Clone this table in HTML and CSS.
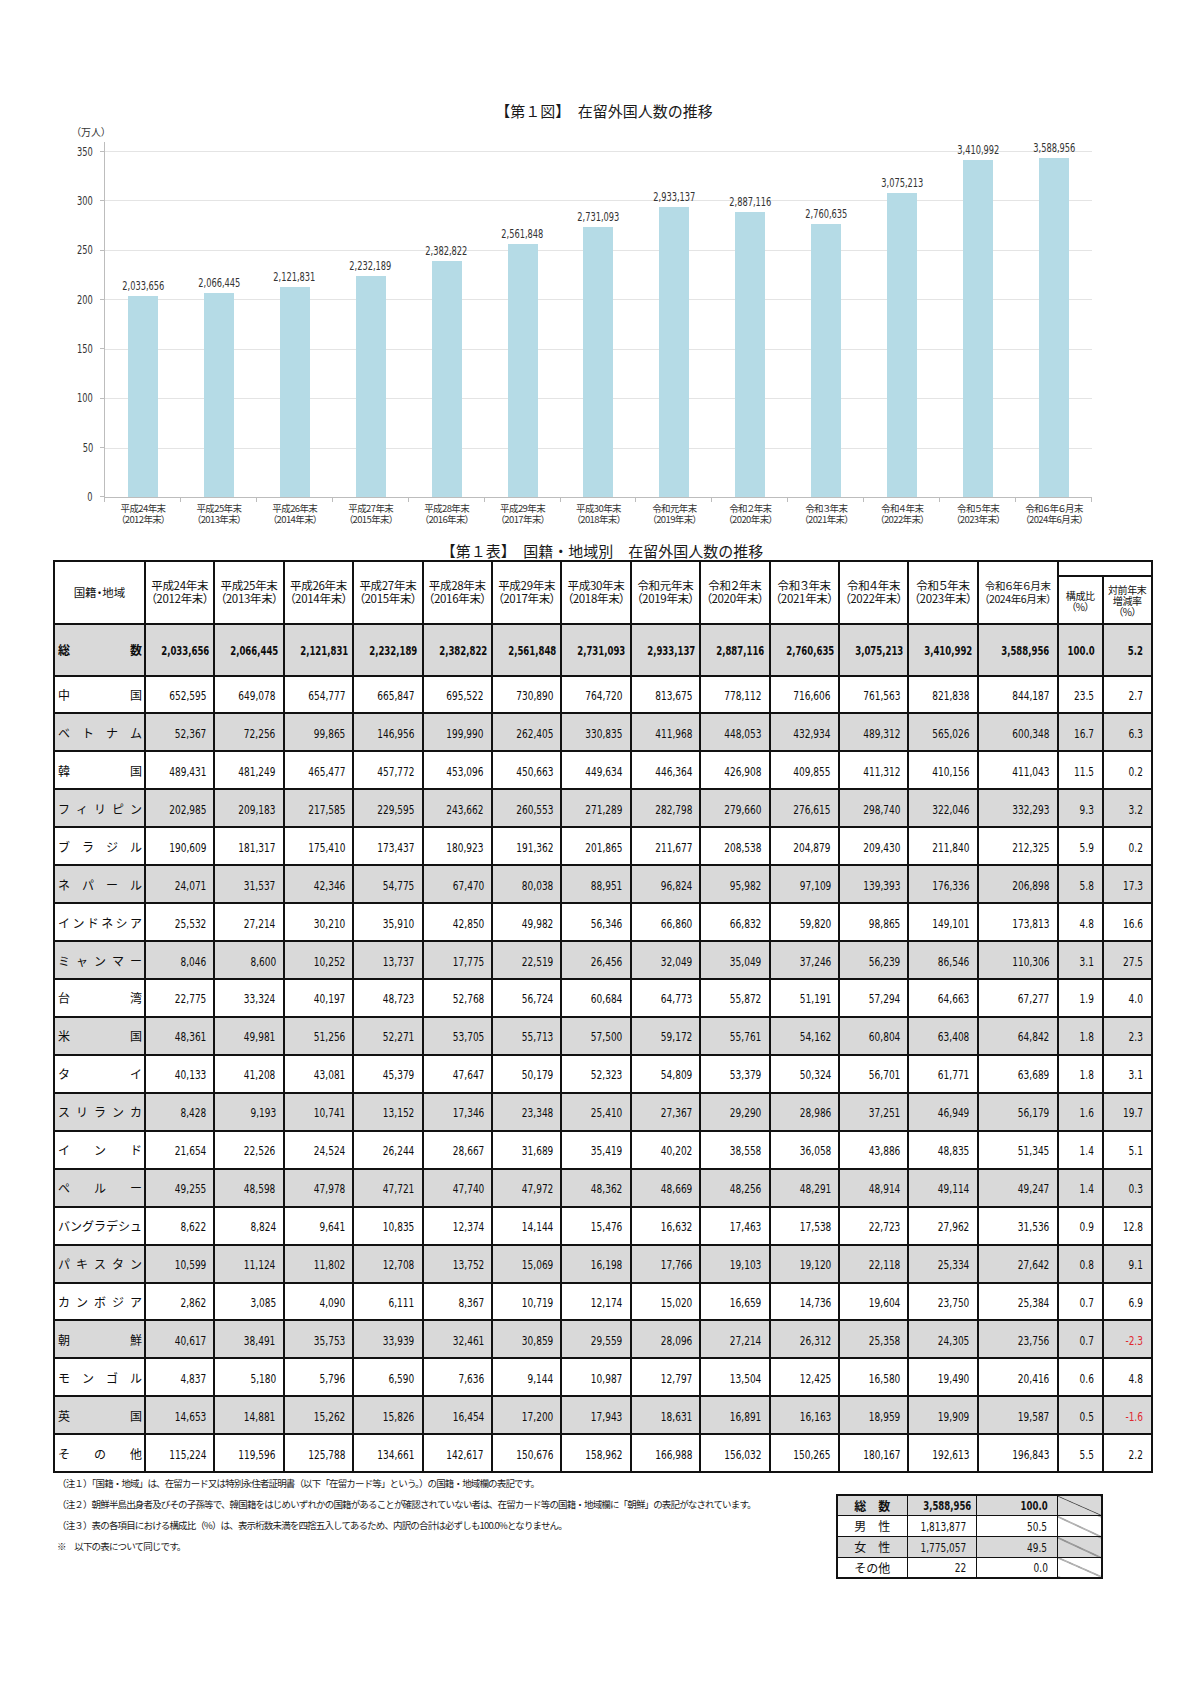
FILE: index.html
```html
<!DOCTYPE html>
<html lang="ja">
<head>
<meta charset="utf-8">
<title>在留外国人数の推移</title>
<link rel="stylesheet" href="styles.css">
</head>
<body>
<div class="page">
  <h1 class="fig-title">【第１図】　在留外国人数の推移</h1>
  <div class="unit">（万人）</div>
  <div class="chart-grid">
    <div class="yaxis">
      <span class="yl"><span class="nx">350</span></span><span class="yl"><span class="nx">300</span></span><span class="yl"><span class="nx">250</span></span><span class="yl"><span class="nx">200</span></span>
      <span class="yl"><span class="nx">150</span></span><span class="yl"><span class="nx">100</span></span><span class="yl"><span class="nx">50</span></span><span class="yl"><span class="nx">0</span></span>
    </div>
    <div class="plot">
      <div class="slot"><span class="val">2,033,656</span><div class="bar" style="height:201.04px"></div></div>
      <div class="slot"><span class="val">2,066,445</span><div class="bar" style="height:204.28px"></div></div>
      <div class="slot"><span class="val">2,121,831</span><div class="bar" style="height:209.76px"></div></div>
      <div class="slot"><span class="val">2,232,189</span><div class="bar" style="height:220.67px"></div></div>
      <div class="slot"><span class="val">2,382,822</span><div class="bar" style="height:235.56px"></div></div>
      <div class="slot"><span class="val">2,561,848</span><div class="bar" style="height:253.26px"></div></div>
      <div class="slot"><span class="val">2,731,093</span><div class="bar" style="height:269.99px"></div></div>
      <div class="slot"><span class="val">2,933,137</span><div class="bar" style="height:289.96px"></div></div>
      <div class="slot"><span class="val">2,887,116</span><div class="bar" style="height:285.41px"></div></div>
      <div class="slot"><span class="val">2,760,635</span><div class="bar" style="height:272.91px"></div></div>
      <div class="slot"><span class="val">3,075,213</span><div class="bar" style="height:304.01px"></div></div>
      <div class="slot"><span class="val">3,410,992</span><div class="bar" style="height:337.20px"></div></div>
      <div class="slot"><span class="val">3,588,956</span><div class="bar" style="height:354.79px"></div></div>
    </div>
    <div></div>
    <div class="xlabels">
      <div class="xl"><span class="l1">平成24年末</span><span class="l2">（2012年末）</span></div>
      <div class="xl"><span class="l1">平成25年末</span><span class="l2">（2013年末）</span></div>
      <div class="xl"><span class="l1">平成26年末</span><span class="l2">（2014年末）</span></div>
      <div class="xl"><span class="l1">平成27年末</span><span class="l2">（2015年末）</span></div>
      <div class="xl"><span class="l1">平成28年末</span><span class="l2">（2016年末）</span></div>
      <div class="xl"><span class="l1">平成29年末</span><span class="l2">（2017年末）</span></div>
      <div class="xl"><span class="l1">平成30年末</span><span class="l2">（2018年末）</span></div>
      <div class="xl"><span class="l1">令和元年末</span><span class="l2">（2019年末）</span></div>
      <div class="xl"><span class="l1">令和２年末</span><span class="l2">（2020年末）</span></div>
      <div class="xl"><span class="l1">令和３年末</span><span class="l2">（2021年末）</span></div>
      <div class="xl"><span class="l1">令和４年末</span><span class="l2">（2022年末）</span></div>
      <div class="xl"><span class="l1">令和５年末</span><span class="l2">（2023年末）</span></div>
      <div class="xl"><span class="l1">令和６年６月末</span><span class="l2">（2024年6月末）</span></div>
    </div>
  </div>

  <h2 class="tbl-title">【第１表】　国籍・地域別　在留外国人数の推移</h2>
  <table class="main">
    <colgroup>
      <col class="c-name">
      <col class="c-yr"><col class="c-yr"><col class="c-yr"><col class="c-yr"><col class="c-yr"><col class="c-yr">
      <col class="c-yr"><col class="c-yr"><col class="c-yr"><col class="c-yr"><col class="c-yr"><col class="c-yr">
      <col class="c-jun"><col class="c-pct"><col class="c-chg">
    </colgroup>
    <thead>
      <tr class="hr1">
        <th rowspan="2" class="h-name">国籍・地域</th>
        <th rowspan="2">平成24年末<br>（2012年末）</th>
        <th rowspan="2">平成25年末<br>（2013年末）</th>
        <th rowspan="2">平成26年末<br>（2014年末）</th>
        <th rowspan="2">平成27年末<br>（2015年末）</th>
        <th rowspan="2">平成28年末<br>（2016年末）</th>
        <th rowspan="2">平成29年末<br>（2017年末）</th>
        <th rowspan="2">平成30年末<br>（2018年末）</th>
        <th rowspan="2">令和元年末<br>（2019年末）</th>
        <th rowspan="2">令和２年末<br>（2020年末）</th>
        <th rowspan="2">令和３年末<br>（2021年末）</th>
        <th rowspan="2">令和４年末<br>（2022年末）</th>
        <th rowspan="2">令和５年末<br>（2023年末）</th>
        <th rowspan="2" class="h-jun">令和６年６月末<br>（2024年6月末）</th>
        <th colspan="2" class="h-top"></th>
      </tr>
      <tr class="hr2">
        <th class="h-sm"><span class="hl">構成比</span><span class="hl">（%）</span></th>
        <th class="h-sm"><span class="hl">対前年末</span><span class="hl">増減率</span><span class="hl">（%）</span></th>
      </tr>
    </thead>
    <tbody>
      <tr class="g total"><td class="nm"><span class="sp"><span>総</span><span>数</span></span></td><td><span class="n">2,033,656</span></td><td><span class="n">2,066,445</span></td><td><span class="n">2,121,831</span></td><td><span class="n">2,232,189</span></td><td><span class="n">2,382,822</span></td><td><span class="n">2,561,848</span></td><td><span class="n">2,731,093</span></td><td><span class="n">2,933,137</span></td><td><span class="n">2,887,116</span></td><td><span class="n">2,760,635</span></td><td><span class="n">3,075,213</span></td><td><span class="n">3,410,992</span></td><td><span class="n">3,588,956</span></td><td class="p"><span class="n">100.0</span></td><td class="p"><span class="n">5.2</span></td></tr>
      <tr><td class="nm"><span class="sp"><span>中</span><span>国</span></span></td><td><span class="n">652,595</span></td><td><span class="n">649,078</span></td><td><span class="n">654,777</span></td><td><span class="n">665,847</span></td><td><span class="n">695,522</span></td><td><span class="n">730,890</span></td><td><span class="n">764,720</span></td><td><span class="n">813,675</span></td><td><span class="n">778,112</span></td><td><span class="n">716,606</span></td><td><span class="n">761,563</span></td><td><span class="n">821,838</span></td><td><span class="n">844,187</span></td><td class="p"><span class="n">23.5</span></td><td class="p"><span class="n">2.7</span></td></tr>
      <tr class="g"><td class="nm"><span class="sp"><span>ベ</span><span>ト</span><span>ナ</span><span>ム</span></span></td><td><span class="n">52,367</span></td><td><span class="n">72,256</span></td><td><span class="n">99,865</span></td><td><span class="n">146,956</span></td><td><span class="n">199,990</span></td><td><span class="n">262,405</span></td><td><span class="n">330,835</span></td><td><span class="n">411,968</span></td><td><span class="n">448,053</span></td><td><span class="n">432,934</span></td><td><span class="n">489,312</span></td><td><span class="n">565,026</span></td><td><span class="n">600,348</span></td><td class="p"><span class="n">16.7</span></td><td class="p"><span class="n">6.3</span></td></tr>
      <tr><td class="nm"><span class="sp"><span>韓</span><span>国</span></span></td><td><span class="n">489,431</span></td><td><span class="n">481,249</span></td><td><span class="n">465,477</span></td><td><span class="n">457,772</span></td><td><span class="n">453,096</span></td><td><span class="n">450,663</span></td><td><span class="n">449,634</span></td><td><span class="n">446,364</span></td><td><span class="n">426,908</span></td><td><span class="n">409,855</span></td><td><span class="n">411,312</span></td><td><span class="n">410,156</span></td><td><span class="n">411,043</span></td><td class="p"><span class="n">11.5</span></td><td class="p"><span class="n">0.2</span></td></tr>
      <tr class="g"><td class="nm"><span class="sp"><span>フ</span><span>ィ</span><span>リ</span><span>ピ</span><span>ン</span></span></td><td><span class="n">202,985</span></td><td><span class="n">209,183</span></td><td><span class="n">217,585</span></td><td><span class="n">229,595</span></td><td><span class="n">243,662</span></td><td><span class="n">260,553</span></td><td><span class="n">271,289</span></td><td><span class="n">282,798</span></td><td><span class="n">279,660</span></td><td><span class="n">276,615</span></td><td><span class="n">298,740</span></td><td><span class="n">322,046</span></td><td><span class="n">332,293</span></td><td class="p"><span class="n">9.3</span></td><td class="p"><span class="n">3.2</span></td></tr>
      <tr><td class="nm"><span class="sp"><span>ブ</span><span>ラ</span><span>ジ</span><span>ル</span></span></td><td><span class="n">190,609</span></td><td><span class="n">181,317</span></td><td><span class="n">175,410</span></td><td><span class="n">173,437</span></td><td><span class="n">180,923</span></td><td><span class="n">191,362</span></td><td><span class="n">201,865</span></td><td><span class="n">211,677</span></td><td><span class="n">208,538</span></td><td><span class="n">204,879</span></td><td><span class="n">209,430</span></td><td><span class="n">211,840</span></td><td><span class="n">212,325</span></td><td class="p"><span class="n">5.9</span></td><td class="p"><span class="n">0.2</span></td></tr>
      <tr class="g"><td class="nm"><span class="sp"><span>ネ</span><span>パ</span><span>ー</span><span>ル</span></span></td><td><span class="n">24,071</span></td><td><span class="n">31,537</span></td><td><span class="n">42,346</span></td><td><span class="n">54,775</span></td><td><span class="n">67,470</span></td><td><span class="n">80,038</span></td><td><span class="n">88,951</span></td><td><span class="n">96,824</span></td><td><span class="n">95,982</span></td><td><span class="n">97,109</span></td><td><span class="n">139,393</span></td><td><span class="n">176,336</span></td><td><span class="n">206,898</span></td><td class="p"><span class="n">5.8</span></td><td class="p"><span class="n">17.3</span></td></tr>
      <tr><td class="nm"><span class="sp"><span>イ</span><span>ン</span><span>ド</span><span>ネ</span><span>シ</span><span>ア</span></span></td><td><span class="n">25,532</span></td><td><span class="n">27,214</span></td><td><span class="n">30,210</span></td><td><span class="n">35,910</span></td><td><span class="n">42,850</span></td><td><span class="n">49,982</span></td><td><span class="n">56,346</span></td><td><span class="n">66,860</span></td><td><span class="n">66,832</span></td><td><span class="n">59,820</span></td><td><span class="n">98,865</span></td><td><span class="n">149,101</span></td><td><span class="n">173,813</span></td><td class="p"><span class="n">4.8</span></td><td class="p"><span class="n">16.6</span></td></tr>
      <tr class="g"><td class="nm"><span class="sp"><span>ミ</span><span>ャ</span><span>ン</span><span>マ</span><span>ー</span></span></td><td><span class="n">8,046</span></td><td><span class="n">8,600</span></td><td><span class="n">10,252</span></td><td><span class="n">13,737</span></td><td><span class="n">17,775</span></td><td><span class="n">22,519</span></td><td><span class="n">26,456</span></td><td><span class="n">32,049</span></td><td><span class="n">35,049</span></td><td><span class="n">37,246</span></td><td><span class="n">56,239</span></td><td><span class="n">86,546</span></td><td><span class="n">110,306</span></td><td class="p"><span class="n">3.1</span></td><td class="p"><span class="n">27.5</span></td></tr>
      <tr><td class="nm"><span class="sp"><span>台</span><span>湾</span></span></td><td><span class="n">22,775</span></td><td><span class="n">33,324</span></td><td><span class="n">40,197</span></td><td><span class="n">48,723</span></td><td><span class="n">52,768</span></td><td><span class="n">56,724</span></td><td><span class="n">60,684</span></td><td><span class="n">64,773</span></td><td><span class="n">55,872</span></td><td><span class="n">51,191</span></td><td><span class="n">57,294</span></td><td><span class="n">64,663</span></td><td><span class="n">67,277</span></td><td class="p"><span class="n">1.9</span></td><td class="p"><span class="n">4.0</span></td></tr>
      <tr class="g"><td class="nm"><span class="sp"><span>米</span><span>国</span></span></td><td><span class="n">48,361</span></td><td><span class="n">49,981</span></td><td><span class="n">51,256</span></td><td><span class="n">52,271</span></td><td><span class="n">53,705</span></td><td><span class="n">55,713</span></td><td><span class="n">57,500</span></td><td><span class="n">59,172</span></td><td><span class="n">55,761</span></td><td><span class="n">54,162</span></td><td><span class="n">60,804</span></td><td><span class="n">63,408</span></td><td><span class="n">64,842</span></td><td class="p"><span class="n">1.8</span></td><td class="p"><span class="n">2.3</span></td></tr>
      <tr><td class="nm"><span class="sp"><span>タ</span><span>イ</span></span></td><td><span class="n">40,133</span></td><td><span class="n">41,208</span></td><td><span class="n">43,081</span></td><td><span class="n">45,379</span></td><td><span class="n">47,647</span></td><td><span class="n">50,179</span></td><td><span class="n">52,323</span></td><td><span class="n">54,809</span></td><td><span class="n">53,379</span></td><td><span class="n">50,324</span></td><td><span class="n">56,701</span></td><td><span class="n">61,771</span></td><td><span class="n">63,689</span></td><td class="p"><span class="n">1.8</span></td><td class="p"><span class="n">3.1</span></td></tr>
      <tr class="g"><td class="nm"><span class="sp"><span>ス</span><span>リ</span><span>ラ</span><span>ン</span><span>カ</span></span></td><td><span class="n">8,428</span></td><td><span class="n">9,193</span></td><td><span class="n">10,741</span></td><td><span class="n">13,152</span></td><td><span class="n">17,346</span></td><td><span class="n">23,348</span></td><td><span class="n">25,410</span></td><td><span class="n">27,367</span></td><td><span class="n">29,290</span></td><td><span class="n">28,986</span></td><td><span class="n">37,251</span></td><td><span class="n">46,949</span></td><td><span class="n">56,179</span></td><td class="p"><span class="n">1.6</span></td><td class="p"><span class="n">19.7</span></td></tr>
      <tr><td class="nm"><span class="sp"><span>イ</span><span>ン</span><span>ド</span></span></td><td><span class="n">21,654</span></td><td><span class="n">22,526</span></td><td><span class="n">24,524</span></td><td><span class="n">26,244</span></td><td><span class="n">28,667</span></td><td><span class="n">31,689</span></td><td><span class="n">35,419</span></td><td><span class="n">40,202</span></td><td><span class="n">38,558</span></td><td><span class="n">36,058</span></td><td><span class="n">43,886</span></td><td><span class="n">48,835</span></td><td><span class="n">51,345</span></td><td class="p"><span class="n">1.4</span></td><td class="p"><span class="n">5.1</span></td></tr>
      <tr class="g"><td class="nm"><span class="sp"><span>ペ</span><span>ル</span><span>ー</span></span></td><td><span class="n">49,255</span></td><td><span class="n">48,598</span></td><td><span class="n">47,978</span></td><td><span class="n">47,721</span></td><td><span class="n">47,740</span></td><td><span class="n">47,972</span></td><td><span class="n">48,362</span></td><td><span class="n">48,669</span></td><td><span class="n">48,256</span></td><td><span class="n">48,291</span></td><td><span class="n">48,914</span></td><td><span class="n">49,114</span></td><td><span class="n">49,247</span></td><td class="p"><span class="n">1.4</span></td><td class="p"><span class="n">0.3</span></td></tr>
      <tr><td class="nm"><span class="sp"><span>バ</span><span>ン</span><span>グ</span><span>ラ</span><span>デ</span><span>シ</span><span>ュ</span></span></td><td><span class="n">8,622</span></td><td><span class="n">8,824</span></td><td><span class="n">9,641</span></td><td><span class="n">10,835</span></td><td><span class="n">12,374</span></td><td><span class="n">14,144</span></td><td><span class="n">15,476</span></td><td><span class="n">16,632</span></td><td><span class="n">17,463</span></td><td><span class="n">17,538</span></td><td><span class="n">22,723</span></td><td><span class="n">27,962</span></td><td><span class="n">31,536</span></td><td class="p"><span class="n">0.9</span></td><td class="p"><span class="n">12.8</span></td></tr>
      <tr class="g"><td class="nm"><span class="sp"><span>パ</span><span>キ</span><span>ス</span><span>タ</span><span>ン</span></span></td><td><span class="n">10,599</span></td><td><span class="n">11,124</span></td><td><span class="n">11,802</span></td><td><span class="n">12,708</span></td><td><span class="n">13,752</span></td><td><span class="n">15,069</span></td><td><span class="n">16,198</span></td><td><span class="n">17,766</span></td><td><span class="n">19,103</span></td><td><span class="n">19,120</span></td><td><span class="n">22,118</span></td><td><span class="n">25,334</span></td><td><span class="n">27,642</span></td><td class="p"><span class="n">0.8</span></td><td class="p"><span class="n">9.1</span></td></tr>
      <tr><td class="nm"><span class="sp"><span>カ</span><span>ン</span><span>ボ</span><span>ジ</span><span>ア</span></span></td><td><span class="n">2,862</span></td><td><span class="n">3,085</span></td><td><span class="n">4,090</span></td><td><span class="n">6,111</span></td><td><span class="n">8,367</span></td><td><span class="n">10,719</span></td><td><span class="n">12,174</span></td><td><span class="n">15,020</span></td><td><span class="n">16,659</span></td><td><span class="n">14,736</span></td><td><span class="n">19,604</span></td><td><span class="n">23,750</span></td><td><span class="n">25,384</span></td><td class="p"><span class="n">0.7</span></td><td class="p"><span class="n">6.9</span></td></tr>
      <tr class="g"><td class="nm"><span class="sp"><span>朝</span><span>鮮</span></span></td><td><span class="n">40,617</span></td><td><span class="n">38,491</span></td><td><span class="n">35,753</span></td><td><span class="n">33,939</span></td><td><span class="n">32,461</span></td><td><span class="n">30,859</span></td><td><span class="n">29,559</span></td><td><span class="n">28,096</span></td><td><span class="n">27,214</span></td><td><span class="n">26,312</span></td><td><span class="n">25,358</span></td><td><span class="n">24,305</span></td><td><span class="n">23,756</span></td><td class="p"><span class="n">0.7</span></td><td class="p neg"><span class="n">-2.3</span></td></tr>
      <tr><td class="nm"><span class="sp"><span>モ</span><span>ン</span><span>ゴ</span><span>ル</span></span></td><td><span class="n">4,837</span></td><td><span class="n">5,180</span></td><td><span class="n">5,796</span></td><td><span class="n">6,590</span></td><td><span class="n">7,636</span></td><td><span class="n">9,144</span></td><td><span class="n">10,987</span></td><td><span class="n">12,797</span></td><td><span class="n">13,504</span></td><td><span class="n">12,425</span></td><td><span class="n">16,580</span></td><td><span class="n">19,490</span></td><td><span class="n">20,416</span></td><td class="p"><span class="n">0.6</span></td><td class="p"><span class="n">4.8</span></td></tr>
      <tr class="g"><td class="nm"><span class="sp"><span>英</span><span>国</span></span></td><td><span class="n">14,653</span></td><td><span class="n">14,881</span></td><td><span class="n">15,262</span></td><td><span class="n">15,826</span></td><td><span class="n">16,454</span></td><td><span class="n">17,200</span></td><td><span class="n">17,943</span></td><td><span class="n">18,631</span></td><td><span class="n">16,891</span></td><td><span class="n">16,163</span></td><td><span class="n">18,959</span></td><td><span class="n">19,909</span></td><td><span class="n">19,587</span></td><td class="p"><span class="n">0.5</span></td><td class="p neg"><span class="n">-1.6</span></td></tr>
      <tr><td class="nm"><span class="sp"><span>そ</span><span>の</span><span>他</span></span></td><td><span class="n">115,224</span></td><td><span class="n">119,596</span></td><td><span class="n">125,788</span></td><td><span class="n">134,661</span></td><td><span class="n">142,617</span></td><td><span class="n">150,676</span></td><td><span class="n">158,962</span></td><td><span class="n">166,988</span></td><td><span class="n">156,032</span></td><td><span class="n">150,265</span></td><td><span class="n">180,167</span></td><td><span class="n">192,613</span></td><td><span class="n">196,843</span></td><td class="p"><span class="n">5.5</span></td><td class="p"><span class="n">2.2</span></td></tr>
    </tbody>
  </table>

  <div class="foot">
    <div class="notes">
      <p>（注１）「国籍・地域」は、在留カード又は特別永住者証明書（以下「在留カード等」という。）の国籍・地域欄の表記です。</p>
      <p>（注２）朝鮮半島出身者及びその子孫等で、韓国籍をはじめいずれかの国籍があることが確認されていない者は、在留カード等の国籍・地域欄に「朝鮮」の表記がなされています。</p>
      <p>（注３）表の各項目における構成比（%）は、表示桁数未満を四捨五入してあるため、内訳の合計は必ずしも100.0%となりません。</p>
      <p>※　以下の表について同じです。</p>
    </div>
    <table class="sex">
      <colgroup><col class="s-lab"><col class="s-num"><col class="s-pct"><col class="s-dia"></colgroup>
      <tr class="g total"><td class="lab">総　数</td><td><span class="n">3,588,956</span></td><td><span class="n">100.0</span></td><td class="dia"></td></tr>
      <tr><td class="lab">男　性</td><td><span class="n">1,813,877</span></td><td><span class="n">50.5</span></td><td class="dia"></td></tr>
      <tr class="g"><td class="lab">女　性</td><td><span class="n">1,775,057</span></td><td><span class="n">49.5</span></td><td class="dia"></td></tr>
      <tr><td class="lab">その他</td><td><span class="n">22</span></td><td><span class="n">0.0</span></td><td class="dia"></td></tr>
    </table>
  </div>
</div>
</body>
</html>
```

FILE: styles.css
```css
html, body {
  margin: 0;
  padding: 0;
  background: #ffffff;
}
body {
  font-family: "Noto Sans CJK JP", sans-serif;
  color: #111;
}
.page {
  width: 1156px;
  padding: 101px 0 0 44px;
}

/* condensed numerals */
.n, .nx, .val {
  display: inline-block;
  font-family: "Liberation Sans Narrow", "DejaVu Sans Condensed", sans-serif;
  transform: scaleX(0.8);
  transform-origin: right center;
  white-space: nowrap;
}

/* ---------- figure ---------- */
.fig-title {
  margin: 0;
  width: 1120px;
  text-align: center;
  font-size: 15px;
  line-height: 20px;
  font-weight: 400;
  color: #1a1a1a;
}
.unit {
  margin-top: 5px;
  padding-left: 32px;
  font-size: 10px;
  line-height: 12px;
  color: #333;
  font-feature-settings: "palt";
}
.chart-grid {
  margin-top: 4px;
  display: grid;
  grid-template-columns: 60px 988px;
  grid-template-rows: 356px auto;
}
.yaxis {
  margin-top: 3.5px;
  height: 357.5px;
  display: flex;
  flex-direction: column;
  justify-content: space-between;
}
.yl {
  display: flex;
  justify-content: flex-end;
  align-items: center;
  gap: 7px;
  height: 12px;
  font-size: 11.5px;
  line-height: 12px;
  color: #333;
}
.yl::after {
  content: "";
  width: 4px;
  height: 1px;
  background: #bdbdbd;
}
.plot {
  height: 356px;
  box-sizing: border-box;
  border-left: 1px solid #bdbdbd;
  border-bottom: 1px solid #bdbdbd;
  background-image: repeating-linear-gradient(to top, transparent 0, transparent 48.43px, #e4e4e4 48.43px, #e4e4e4 49.43px);
  display: flex;
  align-items: stretch;
}
.slot {
  flex: 1 1 0;
  display: flex;
  flex-direction: column;
  align-items: center;
  justify-content: flex-end;
}
.val {
  font-size: 11.5px;
  line-height: 12px;
  margin-bottom: 4px;
  color: #333;
  transform-origin: center center;
}
.bar {
  width: 30px;
  background: #b5dbe6;
}
.xlabels {
  display: flex;
  padding-left: 1px;
  background: linear-gradient(#bdbdbd, #bdbdbd) left top / 1px 4px no-repeat;
}
.xl {
  flex: 1 1 0;
  padding-top: 3px;
  display: flex;
  flex-direction: column;
  align-items: center;
  font-size: 9.5px;
  letter-spacing: -0.6px;
  color: #333;
  white-space: nowrap;
  font-feature-settings: "palt";
  background: linear-gradient(#bdbdbd, #bdbdbd) right top / 1px 4px no-repeat;
}
.xl .l1, .xl .l2 {
  display: block;
  height: 11px;
  line-height: 14px;
}

/* ---------- main table ---------- */
.tbl-title {
  margin: 18.5px 0 0 0;
  width: 1116px;
  text-align: center;
  font-size: 15px;
  line-height: 18px;
  font-weight: 400;
  color: #1a1a1a;
}
.main {
  margin-left: 9px;
  width: 1098px;
  table-layout: fixed;
  border-collapse: collapse;
  border: 2px solid #111;
}
.c-name { width: 91px; }
.c-yr { width: 69.4px; }
.c-jun { width: 80px; }
.c-pct { width: 45px; }
.c-chg { width: 49px; }

.main th, .main td {
  border: 2px solid #111;
  padding: 0;
  vertical-align: middle;
}
.main th {
  font-weight: 400;
  font-size: 11.5px;
  line-height: 13px;
  letter-spacing: -0.3px;
  text-align: center;
  white-space: nowrap;
  font-feature-settings: "palt";
  color: #111;
}
.main .h-name {
  font-size: 11.5px;
  letter-spacing: 0;
}
.main .h-jun {
  font-size: 10.5px;
  letter-spacing: -0.4px;
}
.main .h-sm {
  font-size: 10px;
  letter-spacing: -0.4px;
}
.main .h-sm .hl {
  display: block;
  height: 11px;
  line-height: 13px;
}
.hr1 { height: 15px; }
.hr2 { height: 48px; }

.main td {
  height: 37.95px;
  box-sizing: border-box;
  text-align: right;
  padding-right: 7px;
  font-size: 12.5px;
  color: #0d0d0d;
}
.main td.p {
  padding-right: 8px;
}
.main td.neg {
  color: #e0282e;
}
.main tr.g td {
  background: #d9d9d9;
}
.main tr.total td {
  height: 52px;
  font-weight: 700;
}
.main tr.total .n {
  transform: scaleX(0.76);
}
.main td.nm {
  padding: 0 2px 0 3px;
  text-align: left;
  font-size: 12px;
}
.sp {
  display: flex;
  justify-content: space-between;
}

/* ---------- foot ---------- */
.foot {
  margin-left: 9px;
  width: 1098px;
  display: flex;
  align-items: flex-start;
}
.notes {
  flex: 1 1 auto;
  padding-left: 4px;
}
.notes p {
  margin: 0;
  font-size: 9.5px;
  line-height: 21px;
  letter-spacing: -0.85px;
  color: #1a1a1a;
  white-space: nowrap;
}
.sex {
  margin-top: 21px;
  margin-right: 48px;
  width: 265px;
  table-layout: fixed;
  border-collapse: collapse;
  border: 2px solid #111;
}
.s-lab { width: 70px; }
.s-num { width: 69px; }
.s-pct { width: 81px; }
.s-dia { width: 45px; }
.sex td {
  height: 20.75px;
  box-sizing: border-box;
  padding: 0 9px 0 0;
  border: 1.5px solid #111;
  text-align: right;
  font-size: 12.5px;
  line-height: 16px;
  color: #111;
}
.sex td.lab {
  padding: 0;
  text-align: center;
  font-size: 12px;
}
.sex tr.g td {
  background-color: #d9d9d9;
}
.sex tr.total td {
  font-weight: 700;
}
.sex tr.total .n {
  transform: scaleX(0.76);
}
.sex td.dia {
  padding: 0;
  background-image: linear-gradient(to top right, transparent calc(50% - 0.7px), #333 50%, transparent calc(50% + 0.7px));
}
```
